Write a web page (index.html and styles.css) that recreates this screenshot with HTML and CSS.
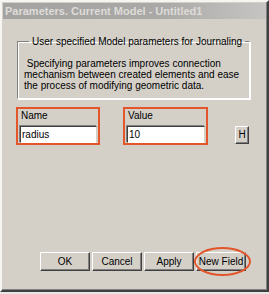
FILE: index.html
```html
<!DOCTYPE html>
<html>
<head>
<meta charset="utf-8">
<title>Parameters</title>
<link rel="stylesheet" href="styles.css">
</head>
<body>
<div class="window">
  <div class="titlebar">Parameters. Current Model - Untitled1</div>
  <div class="content">
    <fieldset class="group">
      <legend class="legend">User specified Model parameters for Journaling</legend>
      <p class="desc">&nbsp;Specifying parameters improves connection<br>mechanism between created elements and ease<br>the process of modifying geometric data.</p>
    </fieldset>
    <div class="fields">
      <div class="field field-name">
        <div class="label">Name</div>
        <div class="input">radius</div>
      </div>
      <div class="field field-value">
        <div class="label">Value</div>
        <div class="input">10</div>
      </div>
      <div class="hbtn">H</div>
    </div>
    <div class="buttons">
      <div class="btn">OK</div>
      <div class="btn">Cancel</div>
      <div class="btn">Apply</div>
      <div class="btn btn-new">New Field<span class="ring"></span></div>
    </div>
  </div>
</div>
</body>
</html>
```
FILE: styles.css
```css
html, body {
  margin: 0;
  padding: 0;
  background: #e8e6e2;
}
body {
  font-family: "Liberation Sans", Arial, sans-serif;
  font-size: 10px;
  color: #000;
}
.window {
  width: 269px;
  height: 292px;
  box-sizing: border-box;
  background: #d4d0c8;
  border-left: 2px solid #f6f5f1;
  border-top: 2px solid #f6f5f1;
  border-right: 2px solid #404040;
  border-bottom: 2px solid #404040;
  box-shadow: inset -1px -1px 0 #808080;
  padding: 1px;
  display: flex;
  flex-direction: column;
}
.titlebar {
  height: 16px;
  line-height: 16px;
  padding-left: 2px;
  background: linear-gradient(to right, #a4a3a1 0%, #aaa9a7 60%, #c6c5c3 100%);
  color: #dedcd8;
  font-weight: bold;
  font-size: 11px;
  white-space: nowrap;
  overflow: hidden;
}
.content {
  display: flex;
  flex-direction: column;
  padding-left: 13px;
}
.group {
  margin: 16px 0 0 1px;
  width: 233px;
  box-sizing: border-box;
  border-color: #808080 #ffffff #ffffff #808080;
  border-style: solid;
  border-width: 1px;
  box-shadow: inset 1px 1px 0 #ffffff, 1px 1px 0 #ffffff;
  padding: 10px 4px 7px 6px;
}
.legend {
  padding: 0 3px;
  margin-left: 5px;
  line-height: 13px;
  font-size: 10px;
  white-space: nowrap;
}
.desc {
  margin: 0;
  line-height: 11px;
  font-size: 10px;
}
.fields {
  display: flex;
  align-items: flex-start;
  margin-top: 8px;
}
.field {
  border: 2px solid #e3562c;
  padding: 0 1px 0 2px;
  display: flex;
  flex-direction: column;
  box-sizing: border-box;
}
.field-name { width: 84px; }
.field-value { width: 85px; margin-left: 23px; }
.label {
  line-height: 13px;
  height: 13px;
  padding-left: 1px;
}
.input {
  margin-top: 4px;
  height: 17px;
  box-sizing: border-box;
  background: #fff;
  border-top: 1px solid #404040;
  border-left: 1px solid #404040;
  border-right: 1px solid #d4d0c8;
  border-bottom: 1px solid #ffffff;
  box-shadow: -1px -1px 0 #808080;
  line-height: 15px;
  padding-left: 1px;
}
.hbtn {
  margin-left: 27px;
  margin-top: 19px;
  width: 14px;
  height: 18px;
  box-sizing: border-box;
  border-top: 1px solid #ffffff;
  border-left: 1px solid #ffffff;
  border-right: 1px solid #404040;
  border-bottom: 1px solid #404040;
  box-shadow: inset -1px -1px 0 #808080;
  text-align: center;
  line-height: 16px;
  font-size: 10px;
}
.buttons {
  display: flex;
  gap: 2px;
  margin-top: 107px;
  padding-left: 24px;
}
.btn {
  position: relative;
  width: 50px;
  height: 19px;
  box-sizing: border-box;
  border-top: 1px solid #ffffff;
  border-left: 1px solid #ffffff;
  border-right: 1px solid #404040;
  border-bottom: 1px solid #404040;
  box-shadow: inset -1px -1px 0 #808080;
  text-align: center;
  line-height: 17px;
  white-space: nowrap;
}
.ring {
  position: absolute;
  left: -3px;
  top: -6px;
  width: 57px;
  height: 29px;
  box-sizing: border-box;
  border: 2px solid #e3562c;
  border-radius: 50%;
}
```
